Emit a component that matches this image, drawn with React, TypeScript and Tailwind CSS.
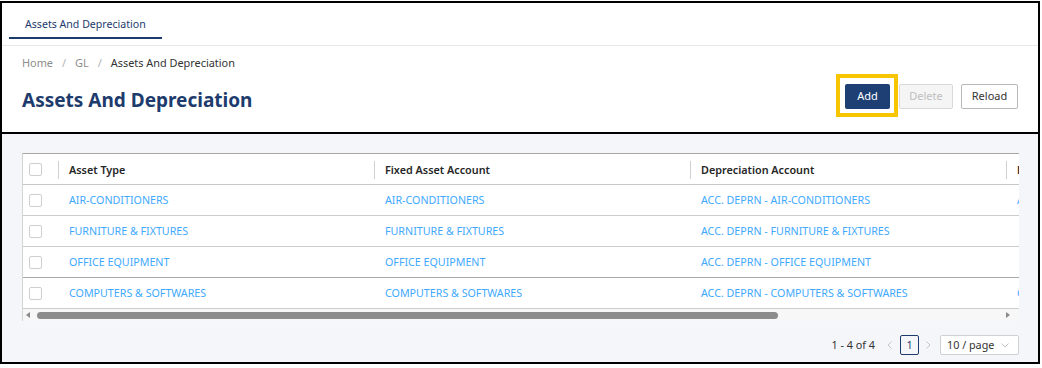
import React from "react";

const rows = [
  ["AIR-CONDITIONERS", "AIR-CONDITIONERS", "ACC. DEPRN - AIR-CONDITIONERS"],
  ["FURNITURE & FIXTURES", "FURNITURE & FIXTURES", "ACC. DEPRN - FURNITURE & FIXTURES"],
  ["OFFICE EQUIPMENT", "OFFICE EQUIPMENT", "ACC. DEPRN - OFFICE EQUIPMENT"],
  ["COMPUTERS & SOFTWARES", "COMPUTERS & SOFTWARES", "ACC. DEPRN - COMPUTERS & SOFTWARES"],
];

function Checkbox() {
  return <div className="w-[13px] h-[13px] border border-[#cfcfcf] rounded-[2px] bg-white" />;
}

export default function App() {
  return (
    <div
      className="w-[1042px] h-[368px] bg-white pt-[1px] overflow-hidden"
      style={{ fontFamily: '"Segoe UI", "Noto Sans", sans-serif' }}
    >
      <div className="w-[1040px] h-[363px] border-2 border-black flex flex-col overflow-hidden">
        {/* Header */}
        <div className="h-[131px] border-b-2 border-black bg-white shrink-0 flex flex-col">
          <div className="h-[43px] border-b border-[#e8e8e8] flex">
            <div className="ml-[7px] h-[36px] w-[153px] pl-[16px] pt-[13px] border-b-2 border-[#1d3b6c] text-[10.6px] leading-[16px] text-[#1d3b6c] whitespace-nowrap">
              Assets And Depreciation
            </div>
          </div>
          <div className="mt-[9px] pl-[20px] text-[10.9px] leading-[16px] flex items-center whitespace-nowrap">
            <span className="text-[#8c8c8c]">Home</span>
            <span className="text-[#b0b0b0] mx-[9px]">/</span>
            <span className="text-[#8c8c8c]">GL</span>
            <span className="text-[#b0b0b0] mx-[9px]">/</span>
            <span className="text-[#333333]">Assets And Depreciation</span>
          </div>
          <div className="mt-[3px] pl-[20px] pr-[20px] flex justify-between items-start">
            <div className="mt-[12px] text-[19px] leading-[28px] font-bold text-[#1d3b6c] whitespace-nowrap">
              Assets And Depreciation
            </div>
            <div className="flex items-start">
              <div className="border-4 border-[#f7c600] pt-[6px] pb-[4px] pl-[5px] pr-[4px]">
                <button className="w-[45px] h-[25px] bg-[#1d3f73] text-white text-[11px] rounded-[2px] flex items-center justify-center">
                  Add
                </button>
              </div>
              <button className="ml-[1px] mt-[10px] w-[54px] h-[25px] bg-[#f5f5f5] border border-[#d9d9d9] text-[#bfbfbf] text-[11px] rounded-[2px] flex items-center justify-center">
                Delete
              </button>
              <button className="ml-[8px] mt-[10px] w-[57px] h-[25px] bg-white border border-[#b8b8b8] text-[#333333] text-[11px] rounded-[2px] flex items-center justify-center">
                Reload
              </button>
            </div>
          </div>
        </div>

        {/* Content */}
        <div className="flex-1 bg-[#f5f6fa] px-[20px] pt-[19px]">
          <div className="w-[997px] bg-white border-t border-l border-t-[#a8a8a8] border-l-[#d4d4d4] overflow-hidden">
            <div className="flex h-[31px] border-b border-[#c8c8c8] items-center text-[10.8px] font-semibold text-[#262626] whitespace-nowrap">
              <div className="w-[35px] shrink-0 h-full flex items-center pl-[6px]">
                <Checkbox />
              </div>
              <div className="w-[316px] shrink-0 h-full flex items-center pl-[11px] pt-[2px] relative">
                <div className="absolute left-0 top-[7px] h-[18px] w-px bg-[#d0d0d0]" />
                Asset Type
              </div>
              <div className="w-[316px] shrink-0 h-full flex items-center pl-[11px] pt-[2px] relative">
                <div className="absolute left-0 top-[7px] h-[18px] w-px bg-[#d0d0d0]" />
                Fixed Asset Account
              </div>
              <div className="w-[316px] shrink-0 h-full flex items-center pl-[11px] pt-[2px] relative">
                <div className="absolute left-0 top-[7px] h-[18px] w-px bg-[#d0d0d0]" />
                Depreciation Account
              </div>
              <div className="w-[316px] shrink-0 h-full flex items-center pl-[11px] pt-[2px] relative">
                <div className="absolute left-0 top-[7px] h-[18px] w-px bg-[#d0d0d0]" />
                Description
              </div>
            </div>
            {rows.map((r, i) => (
              <div
                key={i}
                className={`flex h-[31px] border-b items-center text-[10.7px] text-[#40a9ff] whitespace-nowrap ${
                  i === 2 ? "border-[#a8a8a8]" : "border-[#cccccc]"
                }`}
              >
                <div className="w-[35px] shrink-0 flex items-center pl-[6px]">
                  <Checkbox />
                </div>
                <div className="w-[316px] shrink-0 pl-[11px] pt-[1px]">{r[0]}</div>
                <div className="w-[316px] shrink-0 pl-[11px] pt-[1px]">{r[1]}</div>
                <div className="w-[316px] shrink-0 pl-[11px] pt-[1px]">{r[2]}</div>
                <div className="w-[316px] shrink-0 pl-[11px] pt-[1px]">{i === 0 || i === 3 ? r[0] : ""}</div>
              </div>
            ))}
            {/* scrollbar */}
            <div className="h-[12px] bg-[#f7f7f7] flex items-center">
              <svg width="14" height="12" viewBox="0 0 14 12" className="shrink-0">
                <path d="M3 6 L7 3 L7 9 Z" fill="#8a8a8a" />
              </svg>
              <div className="w-[741px] h-[7px] rounded-full bg-[#8c8c8c]" />
              <div className="flex-1" />
              <svg width="14" height="12" viewBox="0 0 14 12" className="shrink-0 mr-[4px]">
                <path d="M5 3 L9 6 L5 9 Z" fill="#8a8a8a" />
              </svg>
            </div>
          </div>

          {/* pagination */}
          <div className="w-[997px] mt-[14px] flex justify-end items-center text-[10.8px] text-[#333333]">
            <span className="mr-[10px]">1 - 4 of 4</span>
            <svg width="10" height="10" viewBox="0 0 10 10" className="mr-[5px]">
              <path d="M6.5 1.5 L3 5 L6.5 8.5" fill="none" stroke="#c4c4c4" strokeWidth="1" />
            </svg>
            <div className="w-[19px] h-[20px] border border-[#1d3b6c] rounded-[2px] flex items-center justify-center text-[#1d3b6c]">
              1
            </div>
            <svg width="10" height="10" viewBox="0 0 10 10" className="ml-[4px] mr-[7px]">
              <path d="M3.5 1.5 L7 5 L3.5 8.5" fill="none" stroke="#c4c4c4" strokeWidth="1" />
            </svg>
            <div className="w-[79px] h-[20px] border border-[#d0d0d0] rounded-[2px] bg-white flex items-center pl-[6px] pr-[8px] justify-between">
              <span>10 / page</span>
              <svg width="10" height="10" viewBox="0 0 10 10">
                <path d="M1.5 3.5 L5 7 L8.5 3.5" fill="none" stroke="#c4c4c4" strokeWidth="1" />
              </svg>
            </div>
          </div>
        </div>
      </div>
    </div>
  );
}
